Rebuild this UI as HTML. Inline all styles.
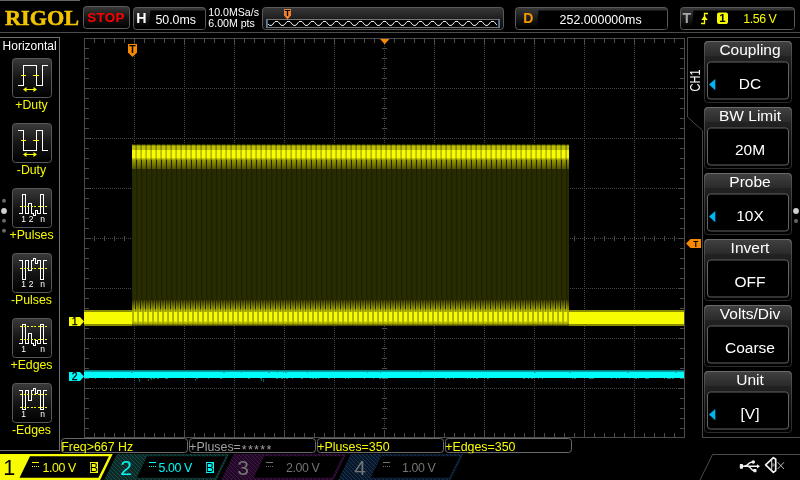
<!DOCTYPE html>
<html><head><meta charset="utf-8"><title>RIGOL</title>
<style>
html,body{margin:0;padding:0;background:#000;overflow:hidden}
svg{display:block;will-change:transform}
text{font-family:"Liberation Sans",sans-serif;}
.serif{font-family:"Liberation Serif",serif;}
</style></head><body>
<svg width="800" height="480" viewBox="0 0 800 480">
<defs>
<linearGradient id="gbtn" x1="0" y1="0" x2="0" y2="1"><stop offset="0" stop-color="#3a3a3a"/><stop offset="0.5" stop-color="#151515"/><stop offset="1" stop-color="#000"/></linearGradient>
<linearGradient id="gbox" x1="0" y1="0" x2="0" y2="1"><stop offset="0" stop-color="#3a3a3a"/><stop offset="0.5" stop-color="#1a1a1a"/><stop offset="0.9" stop-color="#000"/></linearGradient>
<linearGradient id="gmem" x1="0" y1="0" x2="0" y2="1"><stop offset="0" stop-color="#383838"/><stop offset="0.55" stop-color="#1c1c1c"/><stop offset="1" stop-color="#0c0c0c"/></linearGradient>
<linearGradient id="ghdr" x1="0" y1="0" x2="0" y2="1"><stop offset="0" stop-color="#404040"/><stop offset="0.7" stop-color="#2a2a2a"/><stop offset="0.72" stop-color="#222"/><stop offset="1" stop-color="#1e1e1e"/></linearGradient>
<linearGradient id="gitem" x1="0" y1="0" x2="0" y2="1"><stop offset="0" stop-color="#222"/><stop offset="0.33" stop-color="#1e1e1e"/><stop offset="0.75" stop-color="#080808"/><stop offset="1" stop-color="#000"/></linearGradient>
<linearGradient id="gitemb" x1="0" y1="0" x2="0" y2="1"><stop offset="0" stop-color="#5a5a5a"/><stop offset="0.5" stop-color="#3a3a3a"/><stop offset="1" stop-color="#2c2c2c"/></linearGradient>
<pattern id="h2" width="4" height="4" patternUnits="userSpaceOnUse"><rect width="4" height="4" fill="#0a2a28"/><path d="M0,0h1v1h-1zM1,1h1v1h-1zM2,2h1v1h-1zM3,3h1v1h-1z" fill="#1e4846" shape-rendering="crispEdges"/></pattern>
<pattern id="h3" width="4" height="4" patternUnits="userSpaceOnUse"><rect width="4" height="4" fill="#220826"/><path d="M0,0h1v1h-1zM1,1h1v1h-1zM2,2h1v1h-1zM3,3h1v1h-1z" fill="#3e1a46" shape-rendering="crispEdges"/></pattern>
<pattern id="h4" width="4" height="4" patternUnits="userSpaceOnUse"><rect width="4" height="4" fill="#08182a"/><path d="M0,0h1v1h-1zM1,1h1v1h-1zM2,2h1v1h-1zM3,3h1v1h-1z" fill="#183450" shape-rendering="crispEdges"/></pattern>

<pattern id="ptop" x="0" y="144" width="5" height="25" patternUnits="userSpaceOnUse"><rect x="0" y="0" width="2" height="1" fill="#1e1e00"/><rect x="2" y="0" width="1" height="1" fill="#3c3d00"/><rect x="3" y="0" width="1" height="1" fill="#282800"/><rect x="4" y="0" width="1" height="1" fill="#3c3d00"/><rect x="0" y="1" width="1" height="1" fill="#6e7000"/><rect x="1" y="1" width="1" height="1" fill="#646600"/><rect x="2" y="1" width="3" height="1" fill="#969900"/><rect x="0" y="2" width="1" height="1" fill="#969900"/><rect x="1" y="2" width="1" height="1" fill="#878900"/><rect x="2" y="2" width="1" height="1" fill="#b9bc00"/><rect x="3" y="2" width="1" height="1" fill="#bec100"/><rect x="4" y="2" width="1" height="1" fill="#b9bc00"/><rect x="0" y="3" width="1" height="1" fill="#969900"/><rect x="1" y="3" width="1" height="1" fill="#878900"/><rect x="2" y="3" width="1" height="1" fill="#b9bc00"/><rect x="3" y="3" width="1" height="1" fill="#bec100"/><rect x="4" y="3" width="1" height="1" fill="#b9bc00"/><rect x="0" y="4" width="1" height="1" fill="#969900"/><rect x="1" y="4" width="1" height="1" fill="#878900"/><rect x="2" y="4" width="1" height="1" fill="#b9bc00"/><rect x="3" y="4" width="1" height="1" fill="#bec100"/><rect x="4" y="4" width="1" height="1" fill="#b9bc00"/><rect x="0" y="5" width="1" height="1" fill="#969900"/><rect x="1" y="5" width="1" height="1" fill="#878900"/><rect x="2" y="5" width="1" height="1" fill="#b9bc00"/><rect x="3" y="5" width="1" height="1" fill="#bec100"/><rect x="4" y="5" width="1" height="1" fill="#b9bc00"/><rect x="0" y="6" width="1" height="1" fill="#c8cc00"/><rect x="1" y="6" width="1" height="1" fill="#b9bc00"/><rect x="2" y="6" width="3" height="1" fill="#f8fc00"/><rect x="0" y="7" width="1" height="1" fill="#c8cc00"/><rect x="1" y="7" width="1" height="1" fill="#b9bc00"/><rect x="2" y="7" width="3" height="1" fill="#f8fc00"/><rect x="0" y="8" width="1" height="1" fill="#c8cc00"/><rect x="1" y="8" width="1" height="1" fill="#b9bc00"/><rect x="2" y="8" width="3" height="1" fill="#f8fc00"/><rect x="0" y="9" width="1" height="1" fill="#c8cc00"/><rect x="1" y="9" width="1" height="1" fill="#b9bc00"/><rect x="2" y="9" width="3" height="1" fill="#f8fc00"/><rect x="0" y="10" width="1" height="1" fill="#c8cc00"/><rect x="1" y="10" width="1" height="1" fill="#b9bc00"/><rect x="2" y="10" width="3" height="1" fill="#f8fc00"/><rect x="0" y="11" width="1" height="1" fill="#c8cc00"/><rect x="1" y="11" width="1" height="1" fill="#b9bc00"/><rect x="2" y="11" width="3" height="1" fill="#f8fc00"/><rect x="0" y="12" width="1" height="1" fill="#c8cc00"/><rect x="1" y="12" width="1" height="1" fill="#b9bc00"/><rect x="2" y="12" width="3" height="1" fill="#f8fc00"/><rect x="0" y="13" width="1" height="1" fill="#c8cc00"/><rect x="1" y="13" width="1" height="1" fill="#b9bc00"/><rect x="2" y="13" width="3" height="1" fill="#f8fc00"/><rect x="0" y="14" width="1" height="1" fill="#aaad00"/><rect x="1" y="14" width="1" height="1" fill="#969900"/><rect x="2" y="14" width="1" height="1" fill="#c8cc00"/><rect x="3" y="14" width="1" height="1" fill="#cdd100"/><rect x="4" y="14" width="1" height="1" fill="#c8cc00"/><rect x="0" y="15" width="1" height="1" fill="#969900"/><rect x="1" y="15" width="1" height="1" fill="#6e7000"/><rect x="2" y="15" width="1" height="1" fill="#aaad00"/><rect x="3" y="15" width="1" height="1" fill="#afb200"/><rect x="4" y="15" width="1" height="1" fill="#aaad00"/><rect x="0" y="16" width="1" height="1" fill="#8c8e00"/><rect x="1" y="16" width="1" height="1" fill="#222200"/><rect x="2" y="16" width="3" height="1" fill="#969900"/><rect x="0" y="17" width="1" height="1" fill="#848600"/><rect x="1" y="17" width="1" height="1" fill="#222200"/><rect x="2" y="17" width="3" height="1" fill="#8e9000"/><rect x="0" y="18" width="1" height="1" fill="#7c7e00"/><rect x="1" y="18" width="1" height="1" fill="#222200"/><rect x="2" y="18" width="3" height="1" fill="#868800"/><rect x="0" y="19" width="1" height="1" fill="#747600"/><rect x="1" y="19" width="1" height="1" fill="#222200"/><rect x="2" y="19" width="3" height="1" fill="#7e8000"/><rect x="0" y="20" width="1" height="1" fill="#6c6e00"/><rect x="1" y="20" width="1" height="1" fill="#222200"/><rect x="2" y="20" width="3" height="1" fill="#767800"/><rect x="0" y="21" width="1" height="1" fill="#646600"/><rect x="1" y="21" width="1" height="1" fill="#222200"/><rect x="2" y="21" width="3" height="1" fill="#6e7000"/><rect x="0" y="22" width="1" height="1" fill="#5c5d00"/><rect x="1" y="22" width="1" height="1" fill="#222200"/><rect x="2" y="22" width="3" height="1" fill="#666800"/><rect x="0" y="23" width="1" height="1" fill="#545500"/><rect x="1" y="23" width="1" height="1" fill="#222200"/><rect x="2" y="23" width="3" height="1" fill="#5e5f00"/><rect x="0" y="24" width="1" height="1" fill="#4c4d00"/><rect x="1" y="24" width="1" height="1" fill="#222200"/><rect x="2" y="24" width="3" height="1" fill="#565700"/></pattern>
<pattern id="pfill" x="0" y="0" width="5" height="4" patternUnits="userSpaceOnUse"><rect width="5" height="4" fill="#282c00"/><rect x="1" width="1" height="4" fill="#1e2200"/><rect x="2" width="1" height="4" fill="#242800"/></pattern>
<pattern id="pbot" x="0" y="300" width="5" height="26" patternUnits="userSpaceOnUse"><rect x="0" y="0" width="1" height="1" fill="#282800"/><rect x="1" y="0" width="1" height="1" fill="#464700"/><rect x="2" y="0" width="2" height="1" fill="#2d2d00"/><rect x="4" y="0" width="1" height="1" fill="#464700"/><rect x="0" y="1" width="1" height="1" fill="#282800"/><rect x="1" y="1" width="1" height="1" fill="#515200"/><rect x="2" y="1" width="2" height="1" fill="#383900"/><rect x="4" y="1" width="1" height="1" fill="#515200"/><rect x="0" y="2" width="1" height="1" fill="#282800"/><rect x="1" y="2" width="1" height="1" fill="#5c5d00"/><rect x="2" y="2" width="2" height="1" fill="#434400"/><rect x="4" y="2" width="1" height="1" fill="#5c5d00"/><rect x="0" y="3" width="1" height="1" fill="#282800"/><rect x="1" y="3" width="1" height="1" fill="#676900"/><rect x="2" y="3" width="2" height="1" fill="#4e4f00"/><rect x="4" y="3" width="1" height="1" fill="#676900"/><rect x="0" y="4" width="1" height="1" fill="#282800"/><rect x="1" y="4" width="1" height="1" fill="#727400"/><rect x="2" y="4" width="2" height="1" fill="#595a00"/><rect x="4" y="4" width="1" height="1" fill="#727400"/><rect x="0" y="5" width="1" height="1" fill="#282800"/><rect x="1" y="5" width="1" height="1" fill="#7d7f00"/><rect x="2" y="5" width="2" height="1" fill="#646600"/><rect x="4" y="5" width="1" height="1" fill="#7d7f00"/><rect x="0" y="6" width="1" height="1" fill="#282800"/><rect x="1" y="6" width="1" height="1" fill="#888a00"/><rect x="2" y="6" width="2" height="1" fill="#6f7100"/><rect x="4" y="6" width="1" height="1" fill="#888a00"/><rect x="0" y="7" width="1" height="1" fill="#282800"/><rect x="1" y="7" width="1" height="1" fill="#939500"/><rect x="2" y="7" width="2" height="1" fill="#7a7c00"/><rect x="4" y="7" width="1" height="1" fill="#939500"/><rect x="0" y="8" width="1" height="1" fill="#282800"/><rect x="1" y="8" width="1" height="1" fill="#9ea100"/><rect x="2" y="8" width="2" height="1" fill="#858700"/><rect x="4" y="8" width="1" height="1" fill="#9ea100"/><rect x="0" y="9" width="1" height="1" fill="#818300"/><rect x="1" y="9" width="1" height="1" fill="#a9ac00"/><rect x="2" y="9" width="2" height="1" fill="#909200"/><rect x="4" y="9" width="1" height="1" fill="#a9ac00"/><rect x="0" y="10" width="1" height="1" fill="#8c8e00"/><rect x="1" y="10" width="1" height="1" fill="#b4b700"/><rect x="2" y="10" width="2" height="1" fill="#9b9e00"/><rect x="4" y="10" width="1" height="1" fill="#b4b700"/><rect x="0" y="11" width="1" height="1" fill="#979a00"/><rect x="1" y="11" width="1" height="1" fill="#bfc200"/><rect x="2" y="11" width="2" height="1" fill="#a6a900"/><rect x="4" y="11" width="1" height="1" fill="#bfc200"/><rect x="0" y="12" width="2" height="1" fill="#f8fc00"/><rect x="2" y="12" width="1" height="1" fill="#b4b700"/><rect x="3" y="12" width="1" height="1" fill="#acaf00"/><rect x="4" y="12" width="1" height="1" fill="#f8fc00"/><rect x="0" y="13" width="2" height="1" fill="#f8fc00"/><rect x="2" y="13" width="1" height="1" fill="#b4b700"/><rect x="3" y="13" width="1" height="1" fill="#acaf00"/><rect x="4" y="13" width="1" height="1" fill="#f8fc00"/><rect x="0" y="14" width="2" height="1" fill="#f8fc00"/><rect x="2" y="14" width="1" height="1" fill="#b4b700"/><rect x="3" y="14" width="1" height="1" fill="#acaf00"/><rect x="4" y="14" width="1" height="1" fill="#f8fc00"/><rect x="0" y="15" width="2" height="1" fill="#f8fc00"/><rect x="2" y="15" width="1" height="1" fill="#b4b700"/><rect x="3" y="15" width="1" height="1" fill="#acaf00"/><rect x="4" y="15" width="1" height="1" fill="#f8fc00"/><rect x="0" y="16" width="2" height="1" fill="#f8fc00"/><rect x="2" y="16" width="1" height="1" fill="#b4b700"/><rect x="3" y="16" width="1" height="1" fill="#acaf00"/><rect x="4" y="16" width="1" height="1" fill="#f8fc00"/><rect x="0" y="17" width="2" height="1" fill="#f8fc00"/><rect x="2" y="17" width="1" height="1" fill="#b4b700"/><rect x="3" y="17" width="1" height="1" fill="#acaf00"/><rect x="4" y="17" width="1" height="1" fill="#f8fc00"/><rect x="0" y="18" width="2" height="1" fill="#f8fc00"/><rect x="2" y="18" width="1" height="1" fill="#b4b700"/><rect x="3" y="18" width="1" height="1" fill="#acaf00"/><rect x="4" y="18" width="1" height="1" fill="#f8fc00"/><rect x="0" y="19" width="2" height="1" fill="#f8fc00"/><rect x="2" y="19" width="1" height="1" fill="#b4b700"/><rect x="3" y="19" width="1" height="1" fill="#acaf00"/><rect x="4" y="19" width="1" height="1" fill="#f8fc00"/><rect x="0" y="20" width="2" height="1" fill="#f8fc00"/><rect x="2" y="20" width="1" height="1" fill="#b4b700"/><rect x="3" y="20" width="1" height="1" fill="#acaf00"/><rect x="4" y="20" width="1" height="1" fill="#f8fc00"/><rect x="0" y="21" width="2" height="1" fill="#d7db00"/><rect x="2" y="21" width="1" height="1" fill="#b9bc00"/><rect x="3" y="21" width="1" height="1" fill="#b4b700"/><rect x="4" y="21" width="1" height="1" fill="#d7db00"/><rect x="0" y="22" width="2" height="1" fill="#bec100"/><rect x="2" y="22" width="1" height="1" fill="#aaad00"/><rect x="3" y="22" width="1" height="1" fill="#a5a800"/><rect x="4" y="22" width="1" height="1" fill="#bec100"/><rect x="0" y="23" width="2" height="1" fill="#aaad00"/><rect x="2" y="23" width="2" height="1" fill="#969900"/><rect x="4" y="23" width="1" height="1" fill="#aaad00"/><rect x="0" y="24" width="1" height="1" fill="#787a00"/><rect x="1" y="24" width="1" height="1" fill="#828400"/><rect x="2" y="24" width="2" height="1" fill="#6e7000"/><rect x="4" y="24" width="1" height="1" fill="#7d7f00"/><rect x="0" y="25" width="1" height="1" fill="#464700"/><rect x="1" y="25" width="1" height="1" fill="#5a5b00"/><rect x="2" y="25" width="1" height="1" fill="#3c3d00"/><rect x="3" y="25" width="1" height="1" fill="#505100"/><rect x="4" y="25" width="1" height="1" fill="#464700"/></pattern>
<clipPath id="cm"><rect x="60" y="438" width="520" height="15.3"/></clipPath>
</defs>
<rect width="800" height="480" fill="#000"/>
<g shape-rendering="crispEdges">
<rect x="0" y="0" width="80" height="1" fill="#666"/>
<rect x="0" y="32" width="800" height="1" fill="#4c4c4c"/>
</g>
<text class="serif" x="5" y="25.3" font-size="22" font-weight="bold" fill="#f2c400" stroke="#f2c400" stroke-width="0.5" textLength="74" lengthAdjust="spacingAndGlyphs">RIGOL</text>
<rect x="83.5" y="6.5" width="46" height="22" rx="3" fill="url(#gbtn)" stroke="#5a5a5a"/>
<text x="106" y="21.5" font-size="13.4" font-weight="bold" fill="#ff0000" text-anchor="middle" letter-spacing="0.3">STOP</text>
<rect x="133.5" y="7.5" width="72" height="22" rx="3" fill="url(#gbox)" stroke="#5a5a5a"/>
<path d="M150.5,10.5H205V27a2,2 0 0 1 -2,2H149Z" fill="#000"/>
<text x="136.2" y="23" font-size="14.2" font-weight="bold" fill="#fff">H</text>
<text x="155.4" y="23.8" font-size="12.4" fill="#fff">50.0ms</text>
<text x="208.3" y="15.7" font-size="10.6" fill="#fff">10.0MSa/s</text>
<text x="208.3" y="26.8" font-size="10.6" fill="#fff">6.00M pts</text>
<rect x="262.5" y="7.5" width="241" height="22" rx="3" fill="url(#gmem)" stroke="#5a5a5a"/>
<rect x="266.5" y="19.5" width="233" height="8" fill="#000" stroke="#777" shape-rendering="crispEdges"/>
<rect x="267" y="20" width="1" height="7" fill="#2a6ab0"/><rect x="498" y="20" width="1" height="7" fill="#2a6ab0"/>
<path d="M268.0,24.05 L269.0,25.17 L270.0,25.40 L271.0,25.40 L272.0,25.17 L273.0,24.05 L274.0,22.75 L275.0,21.63 L276.0,21.40 L277.0,21.40 L278.0,21.63 L279.0,22.75 L280.0,24.05 L281.0,25.17 L282.0,25.40 L283.0,25.40 L284.0,25.17 L285.0,24.05 L286.0,22.75 L287.0,21.63 L288.0,21.40 L289.0,21.40 L290.0,21.63 L291.0,22.75 L292.0,24.05 L293.0,25.17 L294.0,25.40 L295.0,25.40 L296.0,25.17 L297.0,24.05 L298.0,22.75 L299.0,21.63 L300.0,21.40 L301.0,21.40 L302.0,21.63 L303.0,22.75 L304.0,24.05 L305.0,25.17 L306.0,25.40 L307.0,25.40 L308.0,25.17 L309.0,24.05 L310.0,22.75 L311.0,21.63 L312.0,21.40 L313.0,21.40 L314.0,21.63 L315.0,22.75 L316.0,24.05 L317.0,25.17 L318.0,25.40 L319.0,25.40 L320.0,25.17 L321.0,24.05 L322.0,22.75 L323.0,21.63 L324.0,21.40 L325.0,21.40 L326.0,21.63 L327.0,22.75 L328.0,24.05 L329.0,25.17 L330.0,25.40 L331.0,25.40 L332.0,25.17 L333.0,24.05 L334.0,22.75 L335.0,21.63 L336.0,21.40 L337.0,21.40 L338.0,21.63 L339.0,22.75 L340.0,24.05 L341.0,25.17 L342.0,25.40 L343.0,25.40 L344.0,25.17 L345.0,24.05 L346.0,22.75 L347.0,21.63 L348.0,21.40 L349.0,21.40 L350.0,21.63 L351.0,22.75 L352.0,24.05 L353.0,25.17 L354.0,25.40 L355.0,25.40 L356.0,25.17 L357.0,24.05 L358.0,22.75 L359.0,21.63 L360.0,21.40 L361.0,21.40 L362.0,21.63 L363.0,22.75 L364.0,24.05 L365.0,25.17 L366.0,25.40 L367.0,25.40 L368.0,25.17 L369.0,24.05 L370.0,22.75 L371.0,21.63 L372.0,21.40 L373.0,21.40 L374.0,21.63 L375.0,22.75 L376.0,24.05 L377.0,25.17 L378.0,25.40 L379.0,25.40 L380.0,25.17 L381.0,24.05 L382.0,22.75 L383.0,21.63 L384.0,21.40 L385.0,21.40 L386.0,21.63 L387.0,22.75 L388.0,24.05 L389.0,25.17 L390.0,25.40 L391.0,25.40 L392.0,25.17 L393.0,24.05 L394.0,22.75 L395.0,21.63 L396.0,21.40 L397.0,21.40 L398.0,21.63 L399.0,22.75 L400.0,24.05 L401.0,25.17 L402.0,25.40 L403.0,25.40 L404.0,25.17 L405.0,24.05 L406.0,22.75 L407.0,21.63 L408.0,21.40 L409.0,21.40 L410.0,21.63 L411.0,22.75 L412.0,24.05 L413.0,25.17 L414.0,25.40 L415.0,25.40 L416.0,25.17 L417.0,24.05 L418.0,22.75 L419.0,21.63 L420.0,21.40 L421.0,21.40 L422.0,21.63 L423.0,22.75 L424.0,24.05 L425.0,25.17 L426.0,25.40 L427.0,25.40 L428.0,25.17 L429.0,24.05 L430.0,22.75 L431.0,21.63 L432.0,21.40 L433.0,21.40 L434.0,21.63 L435.0,22.75 L436.0,24.05 L437.0,25.17 L438.0,25.40 L439.0,25.40 L440.0,25.17 L441.0,24.05 L442.0,22.75 L443.0,21.63 L444.0,21.40 L445.0,21.40 L446.0,21.63 L447.0,22.75 L448.0,24.05 L449.0,25.17 L450.0,25.40 L451.0,25.40 L452.0,25.17 L453.0,24.05 L454.0,22.75 L455.0,21.63 L456.0,21.40 L457.0,21.40 L458.0,21.63 L459.0,22.75 L460.0,24.05 L461.0,25.17 L462.0,25.40 L463.0,25.40 L464.0,25.17 L465.0,24.05 L466.0,22.75 L467.0,21.63 L468.0,21.40 L469.0,21.40 L470.0,21.63 L471.0,22.75 L472.0,24.05 L473.0,25.17 L474.0,25.40 L475.0,25.40 L476.0,25.17 L477.0,24.05 L478.0,22.75 L479.0,21.63 L480.0,21.40 L481.0,21.40 L482.0,21.63 L483.0,22.75 L484.0,24.05 L485.0,25.17 L486.0,25.40 L487.0,25.40 L488.0,25.17 L489.0,24.05 L490.0,22.75 L491.0,21.63 L492.0,21.40 L493.0,21.40 L494.0,21.63 L495.0,22.75 L496.0,24.05 L497.0,25.17" fill="none" stroke="#fff" stroke-width="0.95"/>
<path d="M284,9H291V15.5L287.5,19.5L284,15.5Z" fill="#f08030"/>
<text x="287.5" y="16.4" font-size="9" font-weight="bold" fill="#000" text-anchor="middle">T</text>
<rect x="515.5" y="7.5" width="152" height="22" rx="3" fill="url(#gbox)" stroke="#5a5a5a"/>
<path d="M538.5,10.5H667V27a2,2 0 0 1 -2,2H537Z" fill="#000"/>
<text x="523.2" y="23" font-size="14" font-weight="bold" fill="#f89800">D</text>
<text x="559.6" y="23.8" font-size="12.4" fill="#fff">252.000000ms</text>
<rect x="680.5" y="7.5" width="114" height="22" rx="3" fill="url(#gbox)" stroke="#5a5a5a"/>
<path d="M693.5,10.5H794V27a2,2 0 0 1 -2,2H692Z" fill="#000"/>
<text x="682.6" y="23" font-size="14" font-weight="bold" fill="#a8a8a8">T</text>
<path d="M701,23.5H704.5V13.5H708" fill="none" stroke="#f8fc00" stroke-width="1.3"/>
<path d="M701.3,20L704.5,15.5L707.7,20Z" fill="#f8fc00"/>
<rect x="717" y="12.5" width="11" height="11.5" rx="2" fill="#f8fc00"/>
<text x="722.5" y="22.4" font-size="11.5" font-weight="bold" fill="#000" text-anchor="middle">1</text>
<text x="743.3" y="23" font-size="12.4" fill="#f8fc00" textLength="33.5">1.56 V</text>
<path d="M0,37.5H59.5V450.5H0" fill="none" stroke="#707070" shape-rendering="crispEdges"/>
<text x="2.6" y="49.8" font-size="12" fill="#fff">Horizontal</text>
<rect x="12.5" y="58.5" width="39" height="39" rx="3" fill="url(#gbtn)" stroke="#585858"/>
<text x="31.5" y="109.4" font-size="12.3" fill="#f8fc00" text-anchor="middle">+Duty</text>
<rect x="12.5" y="123.5" width="39" height="39" rx="3" fill="url(#gbtn)" stroke="#585858"/>
<text x="31.5" y="174.4" font-size="12.3" fill="#f8fc00" text-anchor="middle">-Duty</text>
<rect x="12.5" y="188.5" width="39" height="39" rx="3" fill="url(#gbtn)" stroke="#585858"/>
<text x="31.5" y="239.4" font-size="12.3" fill="#f8fc00" text-anchor="middle">+Pulses</text>
<rect x="12.5" y="253.5" width="39" height="39" rx="3" fill="url(#gbtn)" stroke="#585858"/>
<text x="31.5" y="304.4" font-size="12.3" fill="#f8fc00" text-anchor="middle">-Pulses</text>
<rect x="12.5" y="318.5" width="39" height="39" rx="3" fill="url(#gbtn)" stroke="#585858"/>
<text x="31.5" y="369.4" font-size="12.3" fill="#f8fc00" text-anchor="middle">+Edges</text>
<rect x="12.5" y="383.5" width="39" height="39" rx="3" fill="url(#gbtn)" stroke="#585858"/>
<text x="31.5" y="434.4" font-size="12.3" fill="#f8fc00" text-anchor="middle">-Edges</text>
<path d="M18,85.5H23.5V65.5H36.5V85.5H42.5V65.5H48" fill="none" stroke="#fff" stroke-width="1" shape-rendering="crispEdges"/>
<path d="M21,75.5H26M33,75.5H38.5" fill="none" stroke="#f8fc00" stroke-width="1" shape-rendering="crispEdges"/>
<path d="M24.5,89.5H35.5" stroke="#f8fc00" stroke-width="1" shape-rendering="crispEdges"/><path d="M23,89.5L26.5,87.0V92.0ZM37,89.5L33.5,87.0V92.0Z" fill="#f8fc00"/>
<path d="M18,130.5H23.5V150.5H36.5V130.5H42.5V150.5H48" fill="none" stroke="#fff" stroke-width="1" shape-rendering="crispEdges"/>
<path d="M21,140.5H26M33,140.5H38.5" fill="none" stroke="#f8fc00" stroke-width="1" shape-rendering="crispEdges"/>
<path d="M24.5,154.5H35.5" stroke="#f8fc00" stroke-width="1" shape-rendering="crispEdges"/><path d="M23,154.5L26.5,152.0V157.0ZM37,154.5L33.5,152.0V157.0Z" fill="#f8fc00"/>
<path d="M18.5,213.5H22.5V194.5H25.5V213.5H28.5V203.5H31.5V213.5H33.5V215.5H35.5V210.5H37V213.5H40.5V194.5H43.5V213.5H47" fill="none" stroke="#fff" stroke-width="1" shape-rendering="crispEdges"/>
<path d="M20,206.5H46.5" stroke="#f8fc00" stroke-width="1" stroke-dasharray="2,1.5" shape-rendering="crispEdges"/>
<text x="23.5" y="222.3" font-size="8.5" fill="#fff" text-anchor="middle">1</text>
<text x="31" y="222.3" font-size="8.5" fill="#fff" text-anchor="middle">2</text>
<text x="42.7" y="222.3" font-size="8.5" fill="#fff" text-anchor="middle">n</text>
<path d="M18.5,260.5H22.5V279.5H25.5V260.5H28.5V270.5H31.5V260.5H33.5V258.5H35.5V263.5H37V260.5H40.5V279.5H43.5V260.5H47" fill="none" stroke="#fff" stroke-width="1" shape-rendering="crispEdges"/>
<path d="M20,268.5H46.5" stroke="#f8fc00" stroke-width="1" stroke-dasharray="2,1.5" shape-rendering="crispEdges"/>
<text x="23.5" y="287.3" font-size="8.5" fill="#fff" text-anchor="middle">1</text>
<text x="31" y="287.3" font-size="8.5" fill="#fff" text-anchor="middle">2</text>
<text x="42.7" y="287.3" font-size="8.5" fill="#fff" text-anchor="middle">n</text>
<path d="M18.5,343.5H22.5V324.5H25.5V343.5H28.5V333.5H31.5V343.5H33.5V345.5H35.5V340.5H37V343.5H40.5V324.5H43.5V343.5H47" fill="none" stroke="#fff" stroke-width="1" shape-rendering="crispEdges"/>
<path d="M20,326.5H46.5" stroke="#f8fc00" stroke-width="1" stroke-dasharray="2,1.5" shape-rendering="crispEdges"/>
<path d="M20,339.5H46.5" stroke="#f8fc00" stroke-width="1" stroke-dasharray="2,1.5" shape-rendering="crispEdges"/>
<text x="23.5" y="352.3" font-size="8.5" fill="#fff" text-anchor="middle">1</text>
<text x="42.7" y="352.3" font-size="8.5" fill="#fff" text-anchor="middle">n</text>
<path d="M18.5,390.5H22.5V409.5H25.5V390.5H28.5V400.5H31.5V390.5H33.5V388.5H35.5V393.5H37V390.5H40.5V409.5H43.5V390.5H47" fill="none" stroke="#fff" stroke-width="1" shape-rendering="crispEdges"/>
<path d="M20,394.5H46.5" stroke="#f8fc00" stroke-width="1" stroke-dasharray="2,1.5" shape-rendering="crispEdges"/>
<path d="M20,407.5H46.5" stroke="#f8fc00" stroke-width="1" stroke-dasharray="2,1.5" shape-rendering="crispEdges"/>
<text x="23.5" y="417.3" font-size="8.5" fill="#fff" text-anchor="middle">1</text>
<text x="42.7" y="417.3" font-size="8.5" fill="#fff" text-anchor="middle">n</text>
<circle cx="4" cy="200.7" r="2" fill="#666"/><circle cx="4" cy="211" r="2.9" fill="#d0d0d0"/><circle cx="4" cy="220.7" r="2" fill="#666"/><circle cx="4" cy="230.7" r="2" fill="#666"/>
<g shape-rendering="crispEdges">
<path d="M134.5,40V437" stroke="#464646" stroke-width="1" stroke-dasharray="1,1"/>
<path d="M184.5,40V437" stroke="#464646" stroke-width="1" stroke-dasharray="1,1"/>
<path d="M234.5,40V437" stroke="#464646" stroke-width="1" stroke-dasharray="1,1"/>
<path d="M284.5,40V437" stroke="#464646" stroke-width="1" stroke-dasharray="1,1"/>
<path d="M334.5,40V437" stroke="#464646" stroke-width="1" stroke-dasharray="1,1"/>
<path d="M384.5,40V437" stroke="#464646" stroke-width="1" stroke-dasharray="1,1"/>
<path d="M434.5,40V437" stroke="#464646" stroke-width="1" stroke-dasharray="1,1"/>
<path d="M484.5,40V437" stroke="#464646" stroke-width="1" stroke-dasharray="1,1"/>
<path d="M534.5,40V437" stroke="#464646" stroke-width="1" stroke-dasharray="1,1"/>
<path d="M584.5,40V437" stroke="#464646" stroke-width="1" stroke-dasharray="1,1"/>
<path d="M634.5,40V437" stroke="#464646" stroke-width="1" stroke-dasharray="1,1"/>
<path d="M86,88.5H684" stroke="#464646" stroke-width="1" stroke-dasharray="1,1"/>
<path d="M86,138.5H684" stroke="#464646" stroke-width="1" stroke-dasharray="1,1"/>
<path d="M86,188.5H684" stroke="#464646" stroke-width="1" stroke-dasharray="1,1"/>
<path d="M86,238.5H684" stroke="#464646" stroke-width="1" stroke-dasharray="1,1"/>
<path d="M86,288.5H684" stroke="#464646" stroke-width="1" stroke-dasharray="1,1"/>
<path d="M86,338.5H684" stroke="#464646" stroke-width="1" stroke-dasharray="1,1"/>
<path d="M86,388.5H684" stroke="#464646" stroke-width="1" stroke-dasharray="1,1"/>
<path d="M94.5,39v4M94.5,437v-4M94.5,236v5M104.5,39v4M104.5,437v-4M104.5,236v5M114.5,39v4M114.5,437v-4M114.5,236v5M124.5,39v4M124.5,437v-4M124.5,236v5M134.5,39v6M134.5,437v-6M134.5,236v5M144.5,39v4M144.5,437v-4M144.5,236v5M154.5,39v4M154.5,437v-4M154.5,236v5M164.5,39v4M164.5,437v-4M164.5,236v5M174.5,39v4M174.5,437v-4M174.5,236v5M184.5,39v6M184.5,437v-6M184.5,236v5M194.5,39v4M194.5,437v-4M194.5,236v5M204.5,39v4M204.5,437v-4M204.5,236v5M214.5,39v4M214.5,437v-4M214.5,236v5M224.5,39v4M224.5,437v-4M224.5,236v5M234.5,39v6M234.5,437v-6M234.5,236v5M244.5,39v4M244.5,437v-4M244.5,236v5M254.5,39v4M254.5,437v-4M254.5,236v5M264.5,39v4M264.5,437v-4M264.5,236v5M274.5,39v4M274.5,437v-4M274.5,236v5M284.5,39v6M284.5,437v-6M284.5,236v5M294.5,39v4M294.5,437v-4M294.5,236v5M304.5,39v4M304.5,437v-4M304.5,236v5M314.5,39v4M314.5,437v-4M314.5,236v5M324.5,39v4M324.5,437v-4M324.5,236v5M334.5,39v6M334.5,437v-6M334.5,236v5M344.5,39v4M344.5,437v-4M344.5,236v5M354.5,39v4M354.5,437v-4M354.5,236v5M364.5,39v4M364.5,437v-4M364.5,236v5M374.5,39v4M374.5,437v-4M374.5,236v5M384.5,39v6M384.5,437v-6M384.5,236v5M394.5,39v4M394.5,437v-4M394.5,236v5M404.5,39v4M404.5,437v-4M404.5,236v5M414.5,39v4M414.5,437v-4M414.5,236v5M424.5,39v4M424.5,437v-4M424.5,236v5M434.5,39v6M434.5,437v-6M434.5,236v5M444.5,39v4M444.5,437v-4M444.5,236v5M454.5,39v4M454.5,437v-4M454.5,236v5M464.5,39v4M464.5,437v-4M464.5,236v5M474.5,39v4M474.5,437v-4M474.5,236v5M484.5,39v6M484.5,437v-6M484.5,236v5M494.5,39v4M494.5,437v-4M494.5,236v5M504.5,39v4M504.5,437v-4M504.5,236v5M514.5,39v4M514.5,437v-4M514.5,236v5M524.5,39v4M524.5,437v-4M524.5,236v5M534.5,39v6M534.5,437v-6M534.5,236v5M544.5,39v4M544.5,437v-4M544.5,236v5M554.5,39v4M554.5,437v-4M554.5,236v5M564.5,39v4M564.5,437v-4M564.5,236v5M574.5,39v4M574.5,437v-4M574.5,236v5M584.5,39v6M584.5,437v-6M584.5,236v5M594.5,39v4M594.5,437v-4M594.5,236v5M604.5,39v4M604.5,437v-4M604.5,236v5M614.5,39v4M614.5,437v-4M614.5,236v5M624.5,39v4M624.5,437v-4M624.5,236v5M634.5,39v6M634.5,437v-6M634.5,236v5M644.5,39v4M644.5,437v-4M644.5,236v5M654.5,39v4M654.5,437v-4M654.5,236v5M664.5,39v4M664.5,437v-4M664.5,236v5M674.5,39v4M674.5,437v-4M674.5,236v5M85,48.5h4M684,48.5h-4M382,48.5h5M85,58.5h4M684,58.5h-4M382,58.5h5M85,68.5h4M684,68.5h-4M382,68.5h5M85,78.5h4M684,78.5h-4M382,78.5h5M85,88.5h6M684,88.5h-6M382,88.5h5M85,98.5h4M684,98.5h-4M382,98.5h5M85,108.5h4M684,108.5h-4M382,108.5h5M85,118.5h4M684,118.5h-4M382,118.5h5M85,128.5h4M684,128.5h-4M382,128.5h5M85,138.5h6M684,138.5h-6M382,138.5h5M85,148.5h4M684,148.5h-4M382,148.5h5M85,158.5h4M684,158.5h-4M382,158.5h5M85,168.5h4M684,168.5h-4M382,168.5h5M85,178.5h4M684,178.5h-4M382,178.5h5M85,188.5h6M684,188.5h-6M382,188.5h5M85,198.5h4M684,198.5h-4M382,198.5h5M85,208.5h4M684,208.5h-4M382,208.5h5M85,218.5h4M684,218.5h-4M382,218.5h5M85,228.5h4M684,228.5h-4M382,228.5h5M85,238.5h6M684,238.5h-6M382,238.5h5M85,248.5h4M684,248.5h-4M382,248.5h5M85,258.5h4M684,258.5h-4M382,258.5h5M85,268.5h4M684,268.5h-4M382,268.5h5M85,278.5h4M684,278.5h-4M382,278.5h5M85,288.5h6M684,288.5h-6M382,288.5h5M85,298.5h4M684,298.5h-4M382,298.5h5M85,308.5h4M684,308.5h-4M382,308.5h5M85,318.5h4M684,318.5h-4M382,318.5h5M85,328.5h4M684,328.5h-4M382,328.5h5M85,338.5h6M684,338.5h-6M382,338.5h5M85,348.5h4M684,348.5h-4M382,348.5h5M85,358.5h4M684,358.5h-4M382,358.5h5M85,368.5h4M684,368.5h-4M382,368.5h5M85,378.5h4M684,378.5h-4M382,378.5h5M85,388.5h6M684,388.5h-6M382,388.5h5M85,398.5h4M684,398.5h-4M382,398.5h5M85,408.5h4M684,408.5h-4M382,408.5h5M85,418.5h4M684,418.5h-4M382,418.5h5M85,428.5h4M684,428.5h-4M382,428.5h5" stroke="#4c4c4c" stroke-width="1"/>
<rect x="84.5" y="38.5" width="600" height="399" fill="none" stroke="#4c4c4c"/>
</g>
<g shape-rendering="crispEdges">
<rect x="84" y="370" width="600" height="1" fill="#007c7c"/><rect x="84" y="371" width="600" height="1" fill="#00a4a4"/>
<rect x="84" y="372" width="600" height="6" fill="#00fcf8"/>
<rect x="95" y="378" width="1" height="1" fill="#007070"/><rect x="109" y="378" width="1" height="1" fill="#007070"/><rect x="112" y="378" width="1" height="1" fill="#007070"/><rect x="125" y="378" width="1" height="1" fill="#007070"/><rect x="131" y="372" width="2" height="1" fill="#00b0b0"/><rect x="138" y="378" width="1" height="1" fill="#007070"/><rect x="139" y="379" width="1" height="3" fill="#006060"/><rect x="148" y="379" width="1" height="2" fill="#006060"/><rect x="150" y="378" width="2" height="1" fill="#007070"/><rect x="151" y="379" width="1" height="1" fill="#006060"/><rect x="153" y="378" width="1" height="1" fill="#007070"/><rect x="154" y="378" width="1" height="1" fill="#007070"/><rect x="157" y="378" width="2" height="1" fill="#007070"/><rect x="165" y="378" width="1" height="1" fill="#007070"/><rect x="166" y="378" width="2" height="1" fill="#007070"/><rect x="195" y="379" width="1" height="2" fill="#006060"/><rect x="196" y="378" width="2" height="1" fill="#007070"/><rect x="208" y="378" width="1" height="1" fill="#007070"/><rect x="220" y="378" width="2" height="1" fill="#007070"/><rect x="223" y="372" width="2" height="1" fill="#00b0b0"/><rect x="241" y="372" width="1" height="1" fill="#00b0b0"/><rect x="248" y="378" width="2" height="1" fill="#007070"/><rect x="260" y="378" width="2" height="1" fill="#007070"/><rect x="261" y="379" width="1" height="2" fill="#006060"/><rect x="263" y="379" width="1" height="3" fill="#006060"/><rect x="268" y="372" width="2" height="1" fill="#00b0b0"/><rect x="276" y="378" width="2" height="1" fill="#007070"/><rect x="277" y="372" width="1" height="1" fill="#00b0b0"/><rect x="281" y="378" width="2" height="1" fill="#007070"/><rect x="283" y="372" width="1" height="1" fill="#00b0b0"/><rect x="285" y="372" width="2" height="1" fill="#00b0b0"/><rect x="286" y="378" width="2" height="1" fill="#007070"/><rect x="292" y="378" width="1" height="1" fill="#007070"/><rect x="301" y="378" width="2" height="1" fill="#007070"/><rect x="307" y="372" width="1" height="1" fill="#00b0b0"/><rect x="310" y="378" width="1" height="1" fill="#007070"/><rect x="312" y="378" width="1" height="1" fill="#007070"/><rect x="313" y="378" width="1" height="1" fill="#007070"/><rect x="315" y="378" width="2" height="1" fill="#007070"/><rect x="318" y="378" width="1" height="1" fill="#007070"/><rect x="328" y="378" width="1" height="1" fill="#007070"/><rect x="329" y="378" width="1" height="1" fill="#007070"/><rect x="345" y="378" width="1" height="1" fill="#007070"/><rect x="348" y="378" width="1" height="1" fill="#007070"/><rect x="364" y="378" width="1" height="1" fill="#007070"/><rect x="367" y="372" width="1" height="1" fill="#00b0b0"/><rect x="373" y="378" width="1" height="1" fill="#007070"/><rect x="379" y="378" width="2" height="1" fill="#007070"/><rect x="380" y="372" width="1" height="1" fill="#00b0b0"/><rect x="384" y="378" width="1" height="1" fill="#007070"/><rect x="387" y="378" width="1" height="1" fill="#007070"/><rect x="420" y="372" width="1" height="1" fill="#00b0b0"/><rect x="445" y="378" width="2" height="1" fill="#007070"/><rect x="446" y="378" width="1" height="1" fill="#007070"/><rect x="449" y="378" width="1" height="1" fill="#007070"/><rect x="453" y="378" width="1" height="1" fill="#007070"/><rect x="467" y="378" width="1" height="1" fill="#007070"/><rect x="470" y="378" width="1" height="1" fill="#007070"/><rect x="473" y="378" width="1" height="1" fill="#007070"/><rect x="476" y="378" width="2" height="1" fill="#007070"/><rect x="487" y="378" width="2" height="1" fill="#007070"/><rect x="523" y="378" width="2" height="1" fill="#007070"/><rect x="528" y="378" width="1" height="1" fill="#007070"/><rect x="531" y="378" width="2" height="1" fill="#007070"/><rect x="534" y="372" width="2" height="1" fill="#00b0b0"/><rect x="538" y="378" width="1" height="1" fill="#007070"/><rect x="542" y="378" width="1" height="1" fill="#007070"/><rect x="569" y="372" width="2" height="1" fill="#00b0b0"/><rect x="572" y="378" width="1" height="1" fill="#007070"/><rect x="574" y="378" width="2" height="1" fill="#007070"/><rect x="589" y="378" width="1" height="1" fill="#007070"/><rect x="590" y="378" width="2" height="1" fill="#007070"/><rect x="592" y="378" width="2" height="1" fill="#007070"/><rect x="593" y="378" width="1" height="1" fill="#007070"/><rect x="611" y="378" width="1" height="1" fill="#007070"/><rect x="616" y="378" width="1" height="1" fill="#007070"/><rect x="619" y="378" width="1" height="1" fill="#007070"/><rect x="627" y="372" width="2" height="1" fill="#00b0b0"/><rect x="629" y="378" width="1" height="1" fill="#007070"/><rect x="635" y="378" width="2" height="1" fill="#007070"/><rect x="638" y="378" width="1" height="1" fill="#007070"/><rect x="645" y="378" width="2" height="1" fill="#007070"/><rect x="646" y="378" width="1" height="1" fill="#007070"/><rect x="647" y="378" width="1" height="1" fill="#007070"/><rect x="648" y="378" width="1" height="1" fill="#007070"/><rect x="664" y="378" width="1" height="1" fill="#007070"/><rect x="667" y="378" width="2" height="1" fill="#007070"/><rect x="669" y="378" width="2" height="1" fill="#007070"/><rect x="670" y="378" width="1" height="1" fill="#007070"/><rect x="672" y="378" width="2" height="1" fill="#007070"/><rect x="673" y="378" width="1" height="1" fill="#007070"/><rect x="675" y="372" width="2" height="1" fill="#00b0b0"/><rect x="682" y="378" width="1" height="1" fill="#007070"/>
<rect x="84" y="310" width="48" height="2" fill="#8c8c00"/>
<rect x="84" y="312" width="48" height="12" fill="#f8fc00"/>
<rect x="84" y="324" width="48" height="2" fill="#8c8c00"/>
<rect x="569" y="310" width="115" height="2" fill="#8c8c00"/>
<rect x="569" y="312" width="115" height="12" fill="#f8fc00"/>
<rect x="569" y="324" width="115" height="2" fill="#8c8c00"/>
<rect x="132" y="169" width="437" height="131" fill="url(#pfill)"/>
<rect x="132" y="144" width="437" height="25" fill="url(#ptop)"/>
<rect x="132" y="300" width="437" height="26" fill="url(#pbot)"/>
</g>
<path d="M128,44H137V52.5L132.5,57L128,52.5Z" fill="#f88800"/>
<text x="132.5" y="53.2" font-size="10.5" font-weight="bold" fill="#000" text-anchor="middle">T</text>
<path d="M380,39H389.4L384.7,44.2Z" fill="#f88800"/>
<path d="M686,243.5L690.5,239H701V248H690.5Z" fill="#f88800"/>
<text x="695.7" y="246.8" font-size="8.2" font-weight="bold" fill="#000" text-anchor="middle">T</text>
<path d="M69,317H80L84,321.5L80,326H69Z" fill="#f8fc00"/>
<text x="74.6" y="325.2" font-size="10.5" fill="#000" stroke="#000" stroke-width="0.3" text-anchor="middle">1</text>
<path d="M69,372H80L84,376.5L80,381H69Z" fill="#00fcf8"/>
<text x="74.6" y="380.2" font-size="10.5" fill="#000" stroke="#000" stroke-width="0.3" text-anchor="middle">2</text>
<path d="M800,37.5H687.5V117L702.5,130.5V437.5H800" fill="none" stroke="#4a4a4a"/>
<g transform="translate(700.2,80.4) rotate(-90) scale(0.76,1)"><text x="0" y="0" font-size="14.5" fill="#fff" text-anchor="middle">CH1</text></g>
<rect x="704.5" y="41.5" width="87" height="61" rx="3" fill="url(#gitem)" stroke="url(#gitemb)"/>
<path d="M705,62.0V45.0a3,3 0 0 1 3,-3H788a3,3 0 0 1 3,3V62.0Z" fill="url(#ghdr)"/>
<path d="M705,44.5a3,3 0 0 1 3,-3H788a3,3 0 0 1 3,3" fill="none" stroke="#6a6a6a"/>
<rect x="707.5" y="62.0" width="81" height="37" rx="3" fill="#000" stroke="#646464"/>
<text x="750" y="55.4" font-size="15.5" fill="#fff" text-anchor="middle">Coupling</text>
<text x="750" y="88.5" font-size="15.5" fill="#fff" text-anchor="middle">DC</text>
<path d="M709,84.6L715.3,79.0V90.2Z" fill="#00b4f0"/>
<rect x="704.5" y="107.5" width="87" height="61" rx="3" fill="url(#gitem)" stroke="url(#gitemb)"/>
<path d="M705,128.0V111.0a3,3 0 0 1 3,-3H788a3,3 0 0 1 3,3V128.0Z" fill="url(#ghdr)"/>
<path d="M705,110.5a3,3 0 0 1 3,-3H788a3,3 0 0 1 3,3" fill="none" stroke="#6a6a6a"/>
<rect x="707.5" y="128.0" width="81" height="37" rx="3" fill="#000" stroke="#646464"/>
<text x="750" y="121.4" font-size="15.5" fill="#fff" text-anchor="middle">BW Limit</text>
<text x="750" y="154.5" font-size="15.5" fill="#fff" text-anchor="middle">20M</text>
<rect x="704.5" y="173.5" width="87" height="61" rx="3" fill="url(#gitem)" stroke="url(#gitemb)"/>
<path d="M705,194.0V177.0a3,3 0 0 1 3,-3H788a3,3 0 0 1 3,3V194.0Z" fill="url(#ghdr)"/>
<path d="M705,176.5a3,3 0 0 1 3,-3H788a3,3 0 0 1 3,3" fill="none" stroke="#6a6a6a"/>
<rect x="707.5" y="194.0" width="81" height="37" rx="3" fill="#000" stroke="#646464"/>
<text x="750" y="187.4" font-size="15.5" fill="#fff" text-anchor="middle">Probe</text>
<text x="750" y="220.5" font-size="15.5" fill="#fff" text-anchor="middle">10X</text>
<path d="M709,216.6L715.3,211.0V222.2Z" fill="#00b4f0"/>
<rect x="704.5" y="239.5" width="87" height="61" rx="3" fill="url(#gitem)" stroke="url(#gitemb)"/>
<path d="M705,260.0V243.0a3,3 0 0 1 3,-3H788a3,3 0 0 1 3,3V260.0Z" fill="url(#ghdr)"/>
<path d="M705,242.5a3,3 0 0 1 3,-3H788a3,3 0 0 1 3,3" fill="none" stroke="#6a6a6a"/>
<rect x="707.5" y="260.0" width="81" height="37" rx="3" fill="#000" stroke="#646464"/>
<text x="750" y="253.4" font-size="15.5" fill="#fff" text-anchor="middle">Invert</text>
<text x="750" y="286.5" font-size="15.5" fill="#fff" text-anchor="middle">OFF</text>
<rect x="704.5" y="305.5" width="87" height="61" rx="3" fill="url(#gitem)" stroke="url(#gitemb)"/>
<path d="M705,326.0V309.0a3,3 0 0 1 3,-3H788a3,3 0 0 1 3,3V326.0Z" fill="url(#ghdr)"/>
<path d="M705,308.5a3,3 0 0 1 3,-3H788a3,3 0 0 1 3,3" fill="none" stroke="#6a6a6a"/>
<rect x="707.5" y="326.0" width="81" height="37" rx="3" fill="#000" stroke="#646464"/>
<text x="750" y="319.4" font-size="15.5" fill="#fff" text-anchor="middle">Volts/Div</text>
<text x="750" y="352.5" font-size="15.5" fill="#fff" text-anchor="middle">Coarse</text>
<rect x="704.5" y="371.5" width="87" height="61" rx="3" fill="url(#gitem)" stroke="url(#gitemb)"/>
<path d="M705,392.0V375.0a3,3 0 0 1 3,-3H788a3,3 0 0 1 3,3V392.0Z" fill="url(#ghdr)"/>
<path d="M705,374.5a3,3 0 0 1 3,-3H788a3,3 0 0 1 3,3" fill="none" stroke="#6a6a6a"/>
<rect x="707.5" y="392.0" width="81" height="37" rx="3" fill="#000" stroke="#646464"/>
<text x="750" y="385.4" font-size="15.5" fill="#fff" text-anchor="middle">Unit</text>
<text x="750" y="418.5" font-size="15.5" fill="#fff" text-anchor="middle">[V]</text>
<path d="M709,414.6L715.3,409.0V420.2Z" fill="#00b4f0"/>
<circle cx="796" cy="211" r="2.9" fill="#d0d0d0"/><circle cx="796" cy="221" r="2" fill="#666"/>
<rect x="61.5" y="438.5" width="126" height="14" rx="3" fill="#000" stroke="#6a6a6a"/>
<text x="61.2" y="450.6" font-size="12.4" fill="#f8fc00" clip-path="url(#cm)">Freq&gt;667 Hz</text>
<rect x="189.5" y="438.5" width="126" height="14" rx="3" fill="#000" stroke="#6a6a6a"/>
<text x="189.2" y="450.6" font-size="12.4" fill="#a0a0a0" clip-path="url(#cm)">+Pluses=<tspan dy="3.2" dx="0.8" letter-spacing="1.4">*****</tspan></text>
<rect x="317.5" y="438.5" width="126" height="14" rx="3" fill="#000" stroke="#6a6a6a"/>
<text x="317.2" y="450.6" font-size="12.4" fill="#f8fc00" clip-path="url(#cm)">+Pluses=350</text>
<rect x="445.5" y="438.5" width="126" height="14" rx="3" fill="#000" stroke="#6a6a6a"/>
<text x="445.2" y="450.6" font-size="12.4" fill="#f8fc00" clip-path="url(#cm)">+Edges=350</text>
<path d="M0,454H112.7L100.1,480H0Z" fill="#f8fc00"/>
<path d="M30.00,456.2 L108.90,456.2 L98.42,477.8 L19.52,477.8Z" fill="#000"/>
<text x="9.3" y="475.2" font-size="21.5" fill="#000" text-anchor="middle">1</text>
<g shape-rendering="crispEdges"><rect x="32" y="462" width="7" height="1" fill="#f8fc00"/><rect x="32" y="466" width="1" height="1" fill="#f8fc00"/><rect x="34" y="466" width="1" height="1" fill="#f8fc00"/><rect x="36" y="466" width="1" height="1" fill="#f8fc00"/><rect x="38" y="466" width="1" height="1" fill="#f8fc00"/></g>
<text x="42.4" y="472" font-size="12.4" fill="#f8fc00" textLength="33.8">1.00 V</text>
<rect x="90.0" y="462" width="8" height="11" fill="#f8fc00"/>
<text x="94.0" y="472" font-size="12.4" fill="#000" text-anchor="middle">B</text>
<path d="M116.80,454 L229.20,454 L216.59,480 L104.19,480Z" fill="url(#h2)"/>
<path d="M147.20,456.2 L225.60,456.2 L215.12,477.8 L136.72,477.8Z" fill="#000"/>
<text x="126.0" y="475" font-size="21" fill="#00fcf8" text-anchor="middle">2</text>
<g shape-rendering="crispEdges"><rect x="149" y="462" width="7" height="1" fill="#00fcf8"/><rect x="149" y="466" width="1" height="1" fill="#00fcf8"/><rect x="151" y="466" width="1" height="1" fill="#00fcf8"/><rect x="153" y="466" width="1" height="1" fill="#00fcf8"/><rect x="155" y="466" width="1" height="1" fill="#00fcf8"/></g>
<text x="158.4" y="472" font-size="12.4" fill="#00fcf8" textLength="33.8">5.00 V</text>
<rect x="206.0" y="462" width="8" height="11" fill="#00fcf8"/>
<text x="210.0" y="472" font-size="12.4" fill="#000" text-anchor="middle">B</text>
<path d="M233.80,454 L346.20,454 L333.59,480 L221.19,480Z" fill="url(#h3)"/>
<path d="M264.20,456.2 L342.60,456.2 L332.12,477.8 L253.72,477.8Z" fill="#000"/>
<text x="243.0" y="475" font-size="21" fill="#747474" text-anchor="middle">3</text>
<g shape-rendering="crispEdges"><rect x="266" y="462" width="7" height="1" fill="#747474"/><rect x="266" y="466" width="1" height="1" fill="#747474"/><rect x="268" y="466" width="1" height="1" fill="#747474"/><rect x="270" y="466" width="1" height="1" fill="#747474"/><rect x="272" y="466" width="1" height="1" fill="#747474"/></g>
<text x="286.0" y="472" font-size="12.4" fill="#747474" textLength="33.8">2.00 V</text>
<path d="M350.80,454 L463.20,454 L450.59,480 L338.19,480Z" fill="url(#h4)"/>
<path d="M381.20,456.2 L459.60,456.2 L449.12,477.8 L370.72,477.8Z" fill="#000"/>
<text x="360.0" y="475" font-size="21" fill="#747474" text-anchor="middle">4</text>
<g shape-rendering="crispEdges"><rect x="383" y="462" width="7" height="1" fill="#747474"/><rect x="383" y="466" width="1" height="1" fill="#747474"/><rect x="385" y="466" width="1" height="1" fill="#747474"/><rect x="387" y="466" width="1" height="1" fill="#747474"/><rect x="389" y="466" width="1" height="1" fill="#747474"/></g>
<text x="402.0" y="472" font-size="12.4" fill="#747474" textLength="33.8">1.00 V</text>
<path d="M800,454.5H712.5L700,480" fill="none" stroke="#4a4a4a"/>
<g stroke="#f0f0f0" fill="none" stroke-width="1.5" stroke-linecap="round"><path d="M742,466.3H758"/><path d="M744.5,466.3C748.5,466.3 747.5,462 752.5,462"/><path d="M747.5,466.3C751.5,466.3 750.5,470.6 754,470.6"/></g>
<rect x="739.8" y="464" width="3.2" height="4.8" rx="0.8" fill="#f0f0f0"/><circle cx="753.3" cy="462" r="1.7" fill="#f0f0f0"/><rect x="753.3" y="469" width="3.2" height="3.2" rx="0.6" fill="#f0f0f0"/><path d="M757,464.2L760,466.3L757,468.4Z" fill="#f0f0f0"/>
<path d="M765.6,464.8L773.4,457.6L775.7,459.2V470.6L773.4,472.4Z" fill="none" stroke="#f4f4f4" stroke-width="1.7" stroke-linejoin="round"/><path d="M771.7,459.5V470.8" stroke="#ddd" stroke-width="1"/><circle cx="773" cy="465" r="1.2" fill="none" stroke="#bbb" stroke-width="0.7"/><path d="M777.6,462.2L784,469M784,462.2L777.6,469" stroke="#ccc" stroke-width="0.9"/>
</svg></body></html>
